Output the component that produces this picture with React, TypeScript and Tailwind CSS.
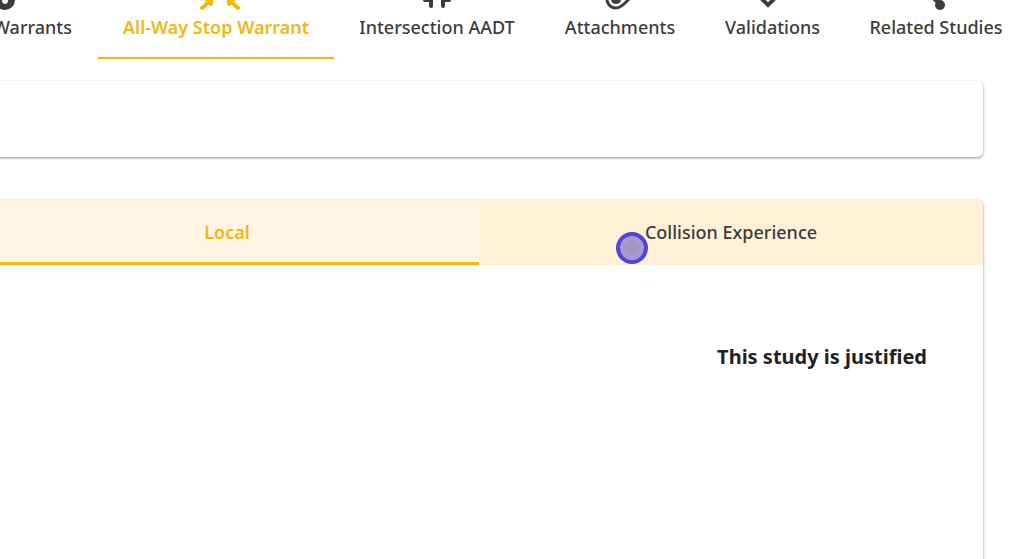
import type { ReactNode } from "react"

const tabs: { label: string; width: string; active?: boolean; icon: ReactNode }[] = [
  {
    label: "Warrants",
    width: "w-[98px] items-start",
    icon: (
      <>
        <path d="M-5 -6V0A10 10 0 0 0 15 0V-6Z" fill="currentColor" />
        <ellipse cx="5" cy="0" rx="3" ry="4" fill="white" />
      </>
    ),
  },
  {
    label: "All-Way Stop Warrant",
    width: "w-[236px] items-center",
    active: true,
    icon: (
      <path d="M8 8 17 0M12 -1H17V4M44 8 35 0M40 -1H35V4" fill="none" stroke="currentColor" strokeWidth="4" strokeLinecap="round" />
    ),
  },
  {
    label: "Intersection AADT",
    width: "w-[206px] items-center",
    icon: (
      <path d="M10 0H16V6M34 0H28V6" fill="none" stroke="currentColor" strokeWidth="4" strokeLinejoin="round" strokeLinecap="round" />
    ),
  },
  {
    label: "Attachments",
    width: "w-[160px] items-center",
    icon: (
      <>
        <path d="M9 -4C8 3 12 8 18 8C22 8 24 6 27 3L34 -4" fill="none" stroke="currentColor" strokeWidth="3" />
        <ellipse cx="18" cy="0" rx="5" ry="4" fill="currentColor" />
      </>
    ),
  },
  {
    label: "Validations",
    width: "w-[145px] items-center",
    icon: <path d="M8 -4 17 5 26 -4" fill="none" stroke="currentColor" strokeWidth="4" />,
  },
  {
    label: "Related Studies",
    width: "w-[182px] items-center",
    icon: (
      <>
        <path d="M17 -4 25 3" stroke="currentColor" strokeWidth="4" />
        <circle cx="26" cy="5" r="5" fill="currentColor" />
      </>
    ),
  },
]

function StudyTabs() {
  return (
    <nav className="flex h-[59px] overflow-hidden">
      {tabs.map((tab) => (
        <button
          key={tab.label}
          type="button"
          className={`${tab.width} ${tab.active ? "border-[#f1b814] font-semibold text-[#f1b814]" : "border-transparent"} flex shrink-0 flex-col border-b-2 whitespace-nowrap`}
        >
          <svg className="h-3 w-11 shrink-0 overflow-visible" viewBox="0 0 44 12" aria-hidden="true">
            {tab.icon}
          </svg>
          <span className={`leading-[30px] ${tab.label === "Warrants" ? "self-end pr-[26px]" : ""}`}>{tab.label}</span>
        </button>
      ))}
    </nav>
  )
}

export default function App() {
  return (
    <div className="min-h-screen overflow-hidden bg-white font-['Noto_Sans','Open_Sans',sans-serif] text-[18px] font-medium text-[#3c3c3c]">
      <StudyTabs />

      <main className="mt-[22px] mr-[41px] -ml-[25px] flex flex-col gap-[43px]">
        <section className="h-[76px] rounded-md shadow-[0_1px_3px_rgba(0,0,0,0.45)]" />

        <section className="min-h-[380px] overflow-hidden rounded-md shadow-[0_1px_3px_rgba(0,0,0,0.45)]">
          <div className="grid h-[65px] grid-cols-2 bg-[#fdf2d8]">
            <button type="button" className="bg-[#fdf5e2] font-semibold text-[#f1b814] shadow-[inset_0_-3px_#f1b814]">
              Local
            </button>
            <button type="button">Collision Experience</button>
          </div>
          <h2 className="mt-[76px] pr-14 text-right text-[20px] leading-8 font-bold text-[#222]">
            This study is justified
          </h2>
        </section>
      </main>

      <div className="pointer-events-none absolute top-[232px] left-[616px] flex size-8 items-center justify-center rounded-full border-4 border-[#5046dc] bg-[#a79bd3]">
        <span className="size-4 rounded-full bg-[#a594c4]" />
      </div>
    </div>
  )
}
